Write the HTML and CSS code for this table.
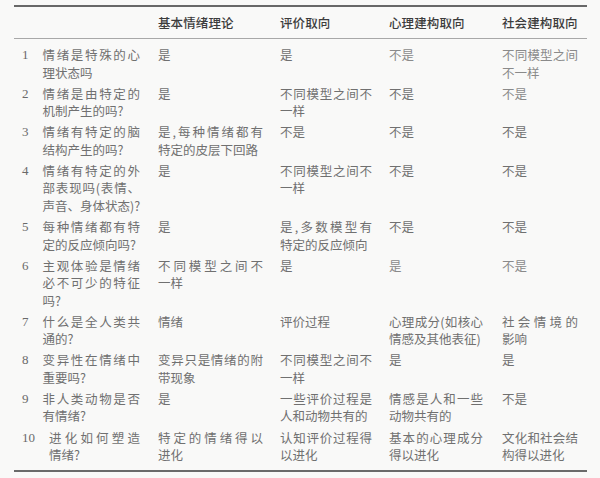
FILE: index.html
```html
<!DOCTYPE html>
<html lang="zh-CN">
<head>
<meta charset="utf-8">
<title>情绪理论比较</title>
<link rel="stylesheet" href="styles.css">
</head>
<body>
<div class="table">
  <div class="row head">
    <div class="c c1"></div>
    <div class="c c2">基本情绪理论</div>
    <div class="c c3">评价取向</div>
    <div class="c c4">心理建构取向</div>
    <div class="c c5">社会建构取向</div>
  </div>
  <div class="body">
    <div class="row">
      <div class="c c1"><span class="num">1</span><div class="q"><span class="l j">情绪是特殊的心</span><span class="l">理状态吗</span></div></div>
      <div class="c c2"><span class="l">是</span></div>
      <div class="c c3"><span class="l">是</span></div>
      <div class="c c4 lt"><span class="l">不是</span></div>
      <div class="c c5 lt"><span class="l j">不同模型之间</span><span class="l">不一样</span></div>
    </div>
    <div class="row">
      <div class="c c1"><span class="num">2</span><div class="q"><span class="l j">情绪是由特定的</span><span class="l">机制产生的吗?</span></div></div>
      <div class="c c2"><span class="l">是</span></div>
      <div class="c c3"><span class="l j">不同模型之间不</span><span class="l">一样</span></div>
      <div class="c c4"><span class="l">不是</span></div>
      <div class="c c5 lt"><span class="l">不是</span></div>
    </div>
    <div class="row">
      <div class="c c1"><span class="num">3</span><div class="q"><span class="l j">情绪有特定的脑</span><span class="l">结构产生的吗?</span></div></div>
      <div class="c c2"><span class="l j">是,每种情绪都有</span><span class="l">特定的皮层下回路</span></div>
      <div class="c c3"><span class="l">不是</span></div>
      <div class="c c4"><span class="l">不是</span></div>
      <div class="c c5"><span class="l">不是</span></div>
    </div>
    <div class="row">
      <div class="c c1"><span class="num">4</span><div class="q"><span class="l j">情绪有特定的外</span><span class="l j">部表现吗(表情、</span><span class="l">声音、身体状态)?</span></div></div>
      <div class="c c2"><span class="l">是</span></div>
      <div class="c c3"><span class="l j">不同模型之间不</span><span class="l">一样</span></div>
      <div class="c c4"><span class="l">不是</span></div>
      <div class="c c5"><span class="l">不是</span></div>
    </div>
    <div class="row">
      <div class="c c1"><span class="num">5</span><div class="q"><span class="l j">每种情绪都有特</span><span class="l">定的反应倾向吗?</span></div></div>
      <div class="c c2"><span class="l">是</span></div>
      <div class="c c3"><span class="l j">是,多数模型有</span><span class="l">特定的反应倾向</span></div>
      <div class="c c4"><span class="l">不是</span></div>
      <div class="c c5"><span class="l">不是</span></div>
    </div>
    <div class="row">
      <div class="c c1"><span class="num">6</span><div class="q"><span class="l j">主观体验是情绪</span><span class="l j">必不可少的特征</span><span class="l">吗?</span></div></div>
      <div class="c c2"><span class="l j">不同模型之间不</span><span class="l">一样</span></div>
      <div class="c c3"><span class="l">是</span></div>
      <div class="c c4 lt"><span class="l">是</span></div>
      <div class="c c5 lt"><span class="l">不是</span></div>
    </div>
    <div class="row">
      <div class="c c1"><span class="num">7</span><div class="q"><span class="l j">什么是全人类共</span><span class="l">通的?</span></div></div>
      <div class="c c2"><span class="l">情绪</span></div>
      <div class="c c3"><span class="l">评价过程</span></div>
      <div class="c c4"><span class="l j">心理成分(如核心</span><span class="l">情感及其他表征)</span></div>
      <div class="c c5"><span class="l j">社会情境的</span><span class="l">影响</span></div>
    </div>
    <div class="row">
      <div class="c c1"><span class="num">8</span><div class="q"><span class="l j">变异性在情绪中</span><span class="l">重要吗?</span></div></div>
      <div class="c c2"><span class="l j">变异只是情绪的附</span><span class="l">带现象</span></div>
      <div class="c c3"><span class="l j">不同模型之间不</span><span class="l">一样</span></div>
      <div class="c c4"><span class="l">是</span></div>
      <div class="c c5"><span class="l">是</span></div>
    </div>
    <div class="row">
      <div class="c c1"><span class="num">9</span><div class="q"><span class="l j">非人类动物是否</span><span class="l">有情绪?</span></div></div>
      <div class="c c2"><span class="l">是</span></div>
      <div class="c c3"><span class="l j">一些评价过程是</span><span class="l">人和动物共有的</span></div>
      <div class="c c4"><span class="l j">情感是人和一些</span><span class="l">动物共有的</span></div>
      <div class="c c5"><span class="l">不是</span></div>
    </div>
    <div class="row">
      <div class="c c1"><span class="num">10</span><div class="q"><span class="l j">进化如何塑造</span><span class="l">情绪?</span></div></div>
      <div class="c c2"><span class="l j">特定的情绪得以</span><span class="l">进化</span></div>
      <div class="c c3"><span class="l j">认知评价过程得</span><span class="l">以进化</span></div>
      <div class="c c4"><span class="l j">基本的心理成分</span><span class="l">得以进化</span></div>
      <div class="c c5"><span class="l j">文化和社会结</span><span class="l">构得以进化</span></div>
    </div>
  </div>
</div>
</body>
</html>
```

FILE: styles.css
```css
html, body {
  margin: 0;
  padding: 0;
  background: #f9f9f8;
}

body {
  font-family: "Noto Sans CJK SC", "Noto Sans", sans-serif;
  font-size: 12.5px;
  color: #707070;
  overflow: hidden;
  height: 478px;
}

.table {
  width: 573px;
  margin: 5px 0 0 14px;
  border-top: 2px solid #686868;
  border-bottom: 2px solid #6a6a6a;
}

.row {
  display: grid;
  grid-template-columns: 144px 122px 109px 113px 85px;
  padding: 1.8px 0;
}

.head {
  height: 31px;
  padding: 0;
  align-items: center;
  border-bottom: 1px solid #a8a8a8;
  color: #3c3c3c;
  font-weight: 500;
  letter-spacing: 0.1px;
}

.body {
  padding: 5.4px 0 5px;
}

.c {
  line-height: 17.5px;
}

.c1 {
  display: flex;
  padding: 0 18px 0 8px;
  gap: 14px;
}

.c2 { padding-right: 17px; }
.c3 { padding-right: 17px; }
.c4 { padding-right: 19px; }
.c5 { padding-right: 9px; }

.lt { color: #8a8a8a; }

.num {
  font-family: "Liberation Serif", serif;
  font-size: 13px;
  color: #6a6a6a;
  flex: none;
}

.q {
  flex: 1;
  min-width: 0;
}

.l {
  display: block;
  white-space: nowrap;
}

.l.j {
  text-align: justify;
  text-align-last: justify;
}
```
